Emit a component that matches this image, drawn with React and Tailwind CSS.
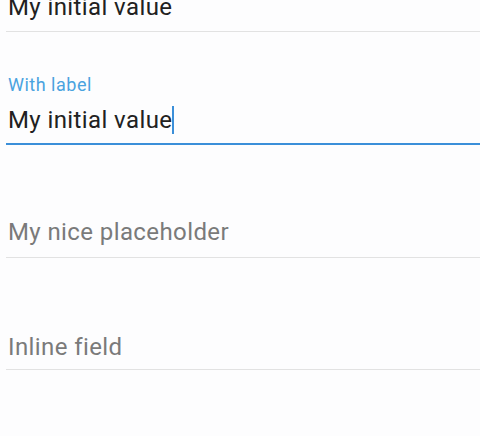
export default function App() {
  return (
    <div
      className="h-[436px] w-[480px] overflow-hidden bg-[#fdfdfe]"
      style={{ fontFamily: 'Roboto, "Noto Sans", sans-serif' }}
    >
      {/* field scrolled partly off the top */}
      <div className="-mt-[80px] ml-[6px] border-b border-[#e2e2e2] pt-[73px] pb-[10px]">
        <div className="pl-[2px] text-[24px] leading-[28px] tracking-[0.4px] text-[#212121]">My initial value</div>
      </div>

      {/* focused field with floating label */}
      <div className="ml-[6px] border-b-2 border-[#3b8fd9] pt-[42px] pb-[9px]">
        <div className="pl-[2px] text-[18px] leading-[22px] tracking-[0.5px] text-[#4aa3df]">With label</div>
        <div className="mt-[10px] flex items-center pl-[2px] text-[24px] leading-[28px] tracking-[0.4px] text-[#212121]">
          <span>My initial value</span>
          <span className="h-[28px] w-[2px] bg-[#3b8fd9]" />
        </div>
      </div>

      {/* placeholder field */}
      <div className="ml-[6px] border-b border-[#e2e2e2] pt-[73px] pb-[11px]">
        <div className="pl-[2px] text-[24px] leading-[28px] tracking-[0.4px] text-[#7a7a7a]">My nice placeholder</div>
      </div>

      {/* inline field */}
      <div className="ml-[6px] border-b border-[#e2e2e2] pt-[75px] pb-[8px]">
        <div className="pl-[2px] text-[24px] leading-[28px] tracking-[0.4px] text-[#7a7a7a]">Inline field</div>
      </div>
    </div>
  )
}
